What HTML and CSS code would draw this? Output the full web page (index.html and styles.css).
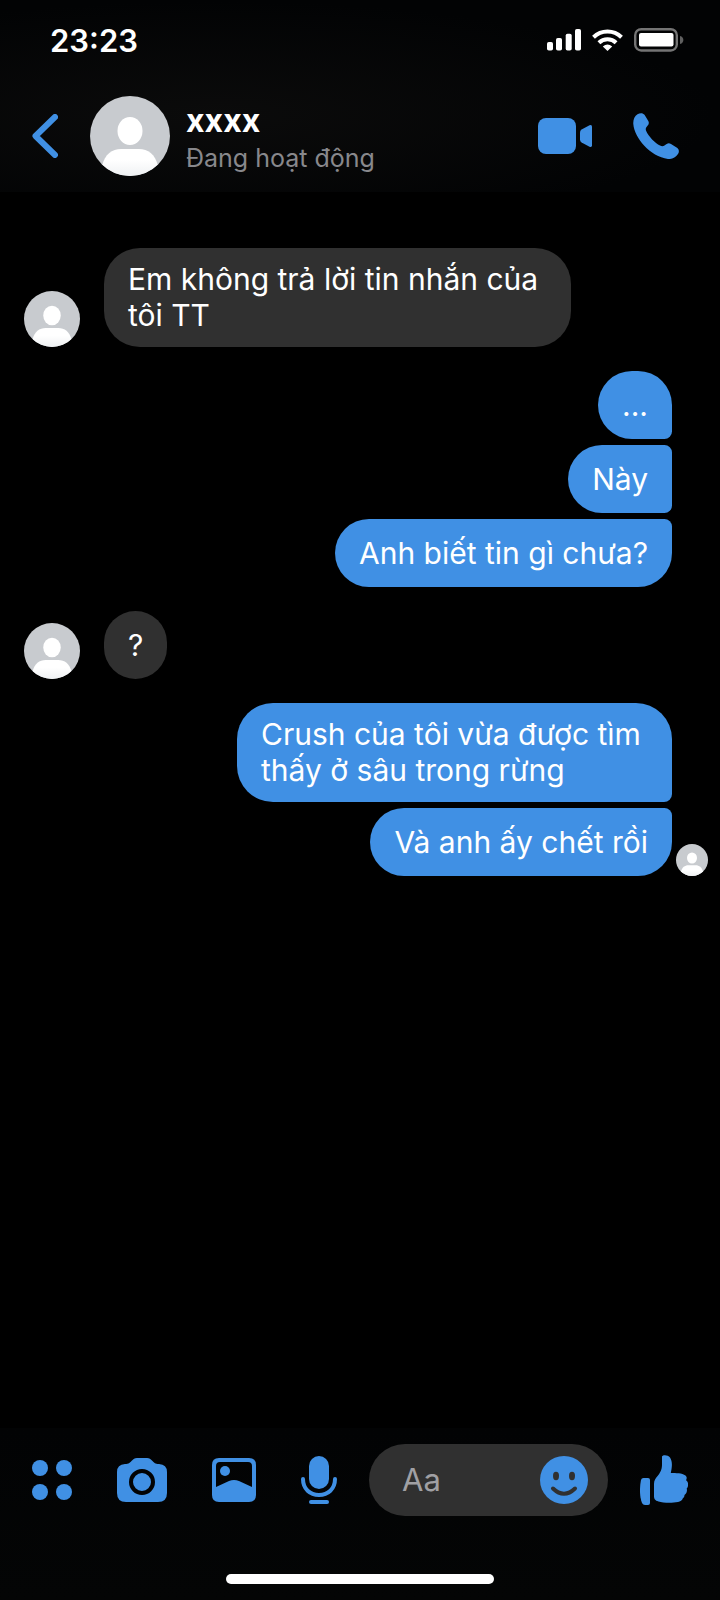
FILE: index.html
```html
<!DOCTYPE html>
<html lang="vi">
<head>
<meta charset="utf-8">
<meta name="viewport" content="width=device-width, initial-scale=1">
<title>xxxx</title>
<link rel="stylesheet" href="styles.css">
</head>
<body>
<svg width="0" height="0" class="defs" aria-hidden="true">
  <defs>
    <linearGradient id="shade" x1="0" y1="0" x2="0" y2="1">
      <stop offset="0.4" stop-color="#fff"/>
      <stop offset="1" stop-color="#eff1f3"/>
    </linearGradient>
    <clipPath id="round"><circle cx="40" cy="40" r="40"/></clipPath>
    <symbol id="person" viewBox="0 0 80 80">
      <g clip-path="url(#round)">
        <rect width="80" height="80" fill="#c8cbcf"/>
        <ellipse cx="40" cy="35" rx="12.5" ry="14" fill="#fff"/>
        <path d="M12 70C15 58 22 53 31 53H49C58 53 65 58 68 70V80H12Z" fill="url(#shade)"/>
      </g>
    </symbol>
  </defs>
</svg>
<div class="screen">
  <header class="top">
    <div class="status">
      <time class="clock">23:23</time>
      <div class="indicators">
        <svg width="34" height="22" viewBox="0 0 34 22" fill="#fff" aria-hidden="true">
          <rect x="0" y="13" width="6" height="8.500" rx="1.800"/>
          <rect x="9" y="9" width="6" height="12.500" rx="1.800"/>
          <rect x="18.700" y="4.700" width="6" height="16.800" rx="1.800"/>
          <rect x="28" y="0" width="6" height="21.500" rx="1.800"/>
        </svg>
        <svg class="wifi" width="31" height="22" viewBox="0 0 31 22" aria-hidden="true">
          <g fill="none" stroke="#fff" stroke-width="4">
            <path d="M1.500 8.300A20 20 0 0 1 29.500 8.300"/>
            <path d="M6.900 13.700A12.300 12.300 0 0 1 24.100 13.700"/>
          </g>
          <path d="M10.800 17.400Q15.500 13.600 20.200 17.400L15.500 22Z" fill="#fff"/>
        </svg>
        <svg width="50" height="24" viewBox="0 0 50 24" aria-hidden="true">
          <rect x="1.200" y="1.200" width="41.600" height="21.300" rx="6" fill="none" stroke="#747474" stroke-width="2.400"/>
          <rect x="5" y="5" width="34.500" height="13.500" rx="2" fill="#fff"/>
          <path d="M46 8C50.500 9 50.500 15 46 16Z" fill="#606060"/>
        </svg>
      </div>
    </div>
    <div class="chat-bar">
      <button class="icon" aria-label="Back">
        <svg width="26" height="44" viewBox="0 0 26 44"><path d="M23 3L3.500 22L23 41" fill="none" stroke="#4090e4" stroke-width="6" stroke-linecap="round" stroke-linejoin="round"/></svg>
      </button>
      <svg class="avatar avatar-large" aria-hidden="true"><use href="#person"/></svg>
      <div class="contact">
        <h1 class="name">xxxx</h1>
        <p class="presence">Đang hoạt động</p>
      </div>
      <div class="calls">
        <button class="icon" aria-label="Video call">
          <svg width="54" height="36" viewBox="0 0 54 36"><rect width="38" height="36" rx="8"/><path d="M42 14.500Q42 12.500 43.600 11.500L51.500 7.300Q54 6.300 54 8.700V27.300Q54 29.700 51.500 28.700L43.600 24.500Q42 23.500 42 21.500Z"/></svg>
        </button>
        <button class="icon" aria-label="Voice call">
          <svg width="46" height="46" viewBox="0 0 46 46"><path d="M4.500 1.200C7-.3 10-.3 11.500 1.800L15.300 8C16.300 10 15.800 11.300 14.500 12.800C12.700 14.800 12.300 16 13.300 18.300C15.500 23 22 30.500 27 32.600C29.500 33.700 31 33.200 32.500 31.800C34.200 30.200 36 29.800 38 31L44 34.800C46.200 36.300 46.400 38.800 45 41C42.500 44.800 39 46.300 35 46C17 43.500 1.500 25 .3 11C0 6.500 1.500 3 4.500 1.200Z"/></svg>
        </button>
      </div>
    </div>
  </header>

  <main class="messages">
    <section class="group received">
      <svg class="avatar avatar-medium" aria-hidden="true"><use href="#person"/></svg>
      <p class="bubble">Em không trả lời tin nhắn của tôi TT</p>
    </section>
    <section class="group sent">
      <p class="bubble">...</p>
      <p class="bubble">Này</p>
      <p class="bubble">Anh biết tin gì chưa?</p>
    </section>
    <section class="group received">
      <svg class="avatar avatar-medium" aria-hidden="true"><use href="#person"/></svg>
      <p class="bubble">?</p>
    </section>
    <section class="group sent">
      <p class="bubble">Crush của tôi vừa được tìm thấy ở sâu trong rừng</p>
      <p class="bubble">Và anh ấy chết rồi</p>
      <svg class="avatar avatar-small" aria-hidden="true"><use href="#person"/></svg>
    </section>
  </main>

  <footer class="bottom">
    <form class="composer">
      <div class="tools">
        <button type="button" class="icon" aria-label="More">
          <svg width="40" height="40" viewBox="0 0 40 40"><circle cx="8" cy="8" r="8"/><circle cx="32" cy="8" r="8"/><circle cx="8" cy="32" r="8"/><circle cx="32" cy="32" r="8"/></svg>
        </button>
        <button type="button" class="icon" aria-label="Camera">
          <svg width="50" height="44" viewBox="0 0 50 44"><path d="M8 6C12 6 12.500 5 14.500 3C16.500 1 17.500 0 20 0H30C32.500 0 33.500 1 35.500 3C37.500 5 38 6 42 6Q50 6.500 50 14V35Q50 44 41 44H9Q0 44 0 35V14Q0 6.500 8 6Z"/><circle cx="25" cy="24" r="11" fill="none" stroke="#020304" stroke-width="4"/></svg>
        </button>
        <button type="button" class="icon" aria-label="Photos">
          <svg width="44" height="44" viewBox="0 0 44 44"><path fill-rule="evenodd" d="M7 0H37Q44 0 44 7V37Q44 44 37 44H7Q0 44 0 37V7Q0 0 7 0ZM8 4Q4 4 4 8V29L17 23Q22 21 27 23L40 29V8Q40 4 36 4Z"/><circle cx="13" cy="13" r="5"/></svg>
        </button>
        <button type="button" class="icon" aria-label="Voice message">
          <svg width="36" height="48" viewBox="0 0 36 48"><rect x="8" width="20" height="33" rx="10"/><rect x="8" y="44" width="20" height="4" rx="2"/><path d="M2 23C2 33 9 39 18 39S34 33 34 23" fill="none" stroke="#4090e4" stroke-width="4" stroke-linecap="round"/></svg>
        </button>
      </div>
      <div class="field">
        <input class="input" type="text" placeholder="Aa" aria-label="Message">
        <button type="button" class="icon" aria-label="Emoji">
          <svg width="48" height="48" viewBox="0 0 48 48"><circle cx="24" cy="24" r="24"/><ellipse cx="16" cy="20" rx="3" ry="4.200" fill="#303030"/><ellipse cx="32" cy="20" rx="3" ry="4.200" fill="#303030"/><path d="M13 32.500Q24 43 35 32.500" fill="none" stroke="#303030" stroke-width="4" stroke-linecap="round"/></svg>
        </button>
      </div>
      <button type="button" class="icon" aria-label="Like">
        <svg width="48" height="50" viewBox="0 0 48 50"><path d="M3.500 23H8Q10 23 10 25V48Q10 50 8 50H5Q3 50 2 48C-.5 42-.5 32 1 25Q1.500 23 3.500 23Z"/><path d="M22 1.500C23-.5 28-.2 30 2.500C33 7 31.800 13 30.800 18C36 18 42 18 45.500 20.500C47.500 22.500 46.500 24 46 25.200C49 27 48.500 32 46.700 33.500C47.500 36 46.500 38.500 44.500 40C44.500 42 43.500 42.700 43 43C42.500 45.500 40 46.500 38 47C32 48.300 23 48 18.500 46.500C15 45.500 14 44 14 41V29C14 25 15.500 23.500 18 20.500C21.500 16 22 13 22 9Z"/></svg>
      </button>
    </form>
    <div class="home-bar"></div>
  </footer>
</div>
</body>
</html>
```

FILE: styles.css
```css
* {
  box-sizing: border-box;
}

body {
  margin: 0;
  background: #000;
  color: #fff;
  font-family: Inter, "Noto Sans", sans-serif;
}

h1,
p {
  margin: 0;
}

.defs {
  position: absolute;
}

.screen {
  display: flex;
  flex-direction: column;
  min-height: 100vh;
}

.icon {
  display: flex;
  flex: none;
  padding: 0;
  border: 0;
  background: none;
  fill: #4090e4;
  cursor: pointer;
}

.avatar {
  display: block;
  flex: none;
}

.avatar-large {
  width: 80px;
  height: 80px;
}

.avatar-medium {
  width: 56px;
  height: 56px;
}

.avatar-small {
  width: 32px;
  height: 32px;
}

/* Header */

.top {
  padding-bottom: 16px;
  background: radial-gradient(ellipse at 30% 60%, #0b0b0b, #020304 70%);
}

.status {
  display: flex;
  align-items: center;
  justify-content: space-between;
  height: 80px;
  padding: 0 36px 0 50px;
}

.clock {
  font-size: 31px;
  font-weight: 600;
  line-height: 36px;
  padding-top: 2px;
}

.indicators {
  display: flex;
  align-items: center;
  gap: 11px;
}

.chat-bar {
  display: flex;
  align-items: center;
  padding: 16px 41px 0 32px;
}

.chat-bar .avatar {
  margin-left: 32px;
}

.contact {
  flex: 1;
  min-width: 0;
  margin-left: 16px;
  padding-top: 6px;
}

.name {
  font-size: 32px;
  font-weight: 700;
  line-height: 38px;
}

.presence {
  color: #88888c;
  font-size: 25px;
  line-height: 36px;
}

.calls {
  display: flex;
  align-items: center;
  gap: 41px;
}

/* Conversation */

.messages {
  display: flex;
  flex: 1;
  flex-direction: column;
  gap: 24px;
  padding: 56px 12px 24px 24px;
}

.bubble {
  display: flex;
  align-items: center;
  min-height: 68px;
  padding: 13px 24px 14px;
  border-radius: 36px;
  font-size: 30px;
  line-height: 36px;
}

.received {
  display: flex;
  align-items: flex-end;
  gap: 24px;
}

.received .bubble {
  max-width: 467px;
  background: #303030;
}

.sent {
  display: grid;
  grid-template-columns: 1fr 32px;
  align-items: end;
  justify-items: end;
  gap: 6px 4px;
}

.sent .bubble {
  grid-column: 1;
  max-width: 435px;
  border-radius: 36px 8px 8px 36px;
  background: #4090e4;
}

.sent .bubble:first-of-type {
  border-top-right-radius: 36px;
}

.sent .bubble:last-of-type {
  border-bottom-right-radius: 36px;
}

/* Composer */

.bottom {
  padding: 16px 32px;
  background: linear-gradient(#020304, #040505);
}

.composer {
  display: flex;
  align-items: center;
  gap: 32px;
}

.tools {
  display: flex;
  align-items: center;
  gap: 45px;
}

.field {
  display: flex;
  flex: 1;
  align-items: center;
  min-width: 0;
  height: 72px;
  padding: 0 20px 0 33px;
  border-radius: 36px;
  background: #303030;
}

.input {
  flex: 1;
  width: 0;
  min-width: 0;
  padding: 0;
  border: 0;
  outline: 0;
  background: none;
  color: #fff;
  font: 31px/40px Inter, "Noto Sans", sans-serif;
}

.input::placeholder {
  color: #a0a0a4;
  opacity: 1;
}

.home-bar {
  width: 268px;
  height: 10px;
  margin: 58px auto 0;
  border-radius: 5px;
  background: #fff;
}
```
